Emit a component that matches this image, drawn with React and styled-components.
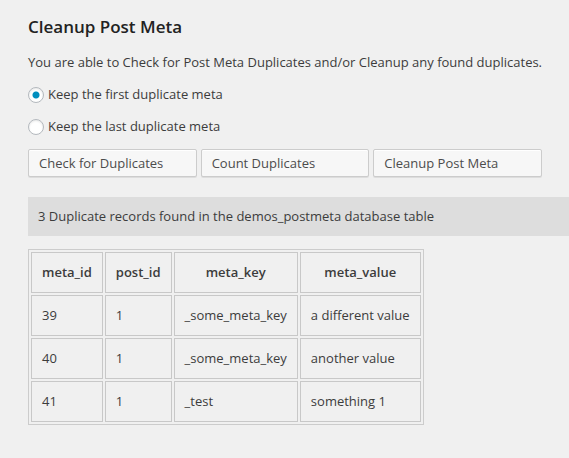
import React from 'react';
import styled, { createGlobalStyle } from 'styled-components';

const GlobalStyle = createGlobalStyle`
  *, *::before, *::after { box-sizing: border-box; }
  body {
    margin: 0;
    background: #f0f0f0;
    color: #3c3c3c;
    font: 13px/20px "Open Sans", sans-serif;
  }
`;

const Page = styled.main`
  padding: 16px 0 32px 28px;
`;

const Title = styled.h1`
  margin: 0 0 14px;
  font-size: 17px;
  line-height: 22px;
  font-weight: 600;
  color: #222;
`;

const Intro = styled.p`
  margin: 0 0 12px;
`;

const Options = styled.fieldset`
  display: flex;
  flex-direction: column;
  align-items: flex-start;
  gap: 12px;
  margin: 0 0 13px;
  padding: 0;
  border: 0;
`;

const Option = styled.label`
  display: block;
`;

const Radio = styled.input`
  appearance: none;
  width: 16px;
  height: 16px;
  margin: 0 4px 0 0;
  border: 1px solid #b4b9be;
  border-radius: 50%;
  background: #fff;
  box-shadow: inset 0 1px 2px rgba(0, 0, 0, 0.1);
  vertical-align: text-bottom;

  &:checked {
    background: radial-gradient(circle, #008ebe 0 3px, #fff 4px);
  }
`;

const Actions = styled.div`
  display: grid;
  grid-template-columns: repeat(3, 1fr);
  gap: 4px;
  margin: 0 27px 20px 0;
`;

const Button = styled.button`
  height: 28px;
  padding: 0 10px;
  border: 1px solid #ccc;
  border-radius: 2px;
  background: #f7f7f7;
  box-shadow: inset 0 1px 0 #fff, 0 1px 0 rgba(0, 0, 0, 0.08);
  color: #4c4c4c;
  font: inherit;
  text-align: left;
`;

const Notice = styled.p`
  margin: 0 0 13px;
  padding: 9px 10px 10px;
  background: #ddd;
`;

const Table = styled.table`
  border: 1px solid #ccc;
  border-spacing: 2px;
`;

const Cell = styled.td`
  padding: 9px 10px 10px;
  border: 1px solid #c8c8c8;
`;

const HeaderCell = styled(Cell).attrs({ as: 'th', scope: 'col' })`
  font-weight: 600;
`;

const options = [
  { value: 'first', label: 'Keep the first duplicate meta' },
  { value: 'last', label: 'Keep the last duplicate meta' },
];
const actions = ['Check for Duplicates', 'Count Duplicates', 'Cleanup Post Meta'];
const columns = ['meta_id', 'post_id', 'meta_key', 'meta_value'];
const records = [
  ['39', '1', '_some_meta_key', 'a different value'],
  ['40', '1', '_some_meta_key', 'another value'],
  ['41', '1', '_test', 'something 1'],
];

export default function App() {
  return (
    <>
      <GlobalStyle />
      <Page>
        <Title>Cleanup Post Meta</Title>
        <Intro>You are able to Check for Post Meta Duplicates and/or Cleanup any found duplicates.</Intro>
        <Options>
          {options.map(({ value, label }) => (
            <Option key={value}>
              <Radio type="radio" name="keep" value={value} defaultChecked={value === 'first'} />
              {label}
            </Option>
          ))}
        </Options>
        <Actions>
          {actions.map((label) => <Button key={label} type="button">{label}</Button>)}
        </Actions>
        <Notice>3 Duplicate records found in the demos_postmeta database table</Notice>
        <Table>
          <thead>
            <tr>{columns.map((name) => <HeaderCell key={name}>{name}</HeaderCell>)}</tr>
          </thead>
          <tbody>
            {records.map((record) => (
              <tr key={record[0]}>
                {record.map((value, i) => <Cell key={columns[i]}>{value}</Cell>)}
              </tr>
            ))}
          </tbody>
        </Table>
      </Page>
    </>
  );
}
